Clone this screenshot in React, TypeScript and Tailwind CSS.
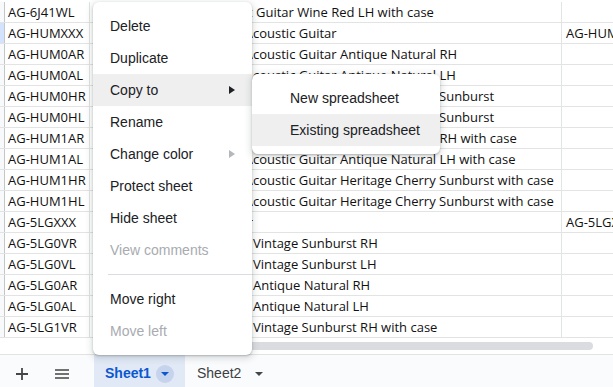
import React from 'react';

type Row = { a: string; lead: string; rest: string; split: number; d: string };

const ROWS: Row[] = [
  { a: 'AG-6J41WL', lead: 'Jumbo Acoustic ', rest: 'Guitar Wine Red LH with case', split: 96, d: '' },
  { a: 'AG-HUMXXX', lead: 'Hummingbird A', rest: 'coustic Guitar', split: 93, d: 'AG-HUMXXX' },
  { a: 'AG-HUM0AR', lead: 'Hummingbird A', rest: 'coustic Guitar Antique Natural RH', split: 93, d: '' },
  { a: 'AG-HUM0AL', lead: 'Hummingbird A', rest: 'coustic Guitar Antique Natural LH', split: 93, d: '' },
  { a: 'AG-HUM0HR', lead: 'Hummingbird A', rest: 'coustic Guitar Heritage Cherry Sunburst', split: 93, d: '' },
  { a: 'AG-HUM0HL', lead: 'Hummingbird A', rest: 'coustic Guitar Heritage Cherry Sunburst', split: 93, d: '' },
  { a: 'AG-HUM1AR', lead: 'Hummingbird A', rest: 'coustic Guitar Antique Natural RH with case', split: 93, d: '' },
  { a: 'AG-HUM1AL', lead: 'Hummingbird A', rest: 'coustic Guitar Antique Natural LH with case', split: 93, d: '' },
  { a: 'AG-HUM1HR', lead: 'Hummingbird A', rest: 'coustic Guitar Heritage Cherry Sunburst with case', split: 93, d: '' },
  { a: 'AG-HUM1HL', lead: 'Hummingbird A', rest: 'coustic Guitar Heritage Cherry Sunburst with case', split: 93, d: '' },
  { a: 'AG-5LGXXX', lead: 'Little Guitar', rest: '', split: 93, d: 'AG-5LGXXX' },
  { a: 'AG-5LG0VR', lead: 'Little Guitar ', rest: 'Vintage Sunburst RH', split: 93, d: '' },
  { a: 'AG-5LG0VL', lead: 'Little Guitar ', rest: 'Vintage Sunburst LH', split: 93, d: '' },
  { a: 'AG-5LG0AR', lead: 'Little Guitar ', rest: 'Antique Natural RH', split: 93, d: '' },
  { a: 'AG-5LG0AL', lead: 'Little Guitar ', rest: 'Antique Natural LH', split: 93, d: '' },
  { a: 'AG-5LG1VR', lead: 'Little Guitar ', rest: 'Vintage Sunburst RH with case', split: 93, d: '' },
];

const MENU = [
  { label: 'Delete' },
  { label: 'Duplicate' },
  { label: 'Copy to', sub: 'dark', active: true },
  { label: 'Rename' },
  { label: 'Change color', sub: 'light' },
  { label: 'Protect sheet' },
  { label: 'Hide sheet' },
  { label: 'View comments', disabled: true },
  { sep: true },
  { label: 'Move right' },
  { label: 'Move left', disabled: true },
];

const Caret = ({ color, className }: { color: string; className?: string }) => (
  <svg width="8" height="4" viewBox="0 0 8 4" className={className}>
    <path d="M0 0h8L4 4z" fill={color} />
  </svg>
);

const App: React.FC = () => {
  return (
    <div className="relative w-[613px] h-[387px] overflow-hidden bg-white flex flex-col">
      {/* GRID */}
      <div className="h-[354px] shrink-0 pt-[2px] font-['Open_Sans',sans-serif] text-[13px] text-[#111] overflow-hidden">
        {ROWS.map((r, i) => (
          <div key={r.a} className="flex h-[21px] border-b border-[#e2e3e3]">
            <div className={`w-[5px] shrink-0 border-r border-[#c4c7c5] ${i === 1 ? 'bg-[#d3e3fd]' : 'bg-[#f8f9fa]'}`} />
            <div className="w-[85px] shrink-0 border-r border-[#e2e3e3] pl-[3px] leading-[20px] whitespace-nowrap overflow-hidden">{r.a}</div>
            <div className="w-[70px] shrink-0 border-r border-[#e2e3e3]" />
            <div className="w-[402px] shrink-0 border-r border-[#e2e3e3] flex leading-[20px] whitespace-pre overflow-hidden">
              <div className="shrink-0 flex justify-end overflow-hidden" style={{ width: r.split }}>
                <span className="shrink-0">{r.lead}</span>
              </div>
              <span>{r.rest}</span>
            </div>
            <div className="w-[120px] shrink-0 pl-[4px] leading-[20px] whitespace-nowrap">{r.d}</div>
          </div>
        ))}
        {/* horizontal scrollbar */}
        <div className="h-[15px] flex items-center pl-[95px] pr-[20px]">
          <div className="h-[8px] flex-1 rounded-full bg-[#dadce0]" />
        </div>
      </div>

      {/* SHEET TABS */}
      <div className="h-[38px] shrink-0 bg-[#f9fbfd] border-t border-[#e1e3e1] flex items-stretch font-['Liberation_Sans',Arial,sans-serif] text-[14px]">
        <div className="w-[44px] flex items-center justify-center">
          <svg width="12" height="12" viewBox="0 0 12 12">
            <path d="M6 0v12M0 6h12" stroke="#444746" strokeWidth="1.8" />
          </svg>
        </div>
        <div className="w-[36px] flex items-center justify-center">
          <svg width="14" height="10" viewBox="0 0 14 10">
            <path d="M0 1h14M0 5h14M0 9h14" stroke="#444746" strokeWidth="1.6" />
          </svg>
        </div>
        <div className="ml-[14px] w-[91px] bg-[#e1e9f7] flex items-center pl-[11px]">
          <span className="font-bold text-[#0b57d0]">Sheet1</span>
          <span className="ml-[5px] w-[18px] h-[18px] rounded-full bg-[#c5d3ec] flex items-center justify-center">
            <Caret color="#0b57d0" />
          </span>
        </div>
        <div className="flex items-center pl-[12px] text-[#3c4043]">
          <span>Sheet2</span>
          <Caret color="#444746" className="ml-[14px]" />
        </div>
      </div>

      {/* CONTEXT MENU */}
      <div className="absolute left-[93px] top-[2px] w-[159px] bg-white rounded-[6px] py-2 shadow-[0_2px_6px_2px_rgba(60,64,67,0.15),0_1px_2px_0_rgba(60,64,67,0.3)] font-['Liberation_Sans',Arial,sans-serif] text-[14px] text-[#202124]">
        {MENU.map((m, i) =>
          m.sep ? (
            <div key={i} className="my-2 ml-[15px] h-px bg-[#dadce0]" />
          ) : (
            <div
              key={i}
              className={`h-8 flex items-center justify-between pl-[17px] pr-[17px] ${m.active ? 'bg-[#efefef]' : ''} ${m.disabled ? 'text-[#a8abb0]' : ''}`}
            >
              <span>{m.label}</span>
              {m.sub && (
                <svg width="6" height="8" viewBox="0 0 6 8">
                  <path d="M0 0l6 4-6 4z" fill={m.sub === 'dark' ? '#202124' : '#b4b7bb'} />
                </svg>
              )}
            </div>
          )
        )}
      </div>

      {/* SUBMENU */}
      <div className="absolute left-[252px] top-[74px] w-[188px] bg-white rounded-[6px] py-2 shadow-[0_2px_6px_2px_rgba(60,64,67,0.15),0_1px_2px_0_rgba(60,64,67,0.3)] font-['Liberation_Sans',Arial,sans-serif] text-[14px] text-[#202124]">
        <div className="h-8 flex items-center pl-[38px]">New spreadsheet</div>
        <div className="h-8 flex items-center pl-[38px] bg-[#efefef]">Existing spreadsheet</div>
      </div>
    </div>
  );
};

export default App;
